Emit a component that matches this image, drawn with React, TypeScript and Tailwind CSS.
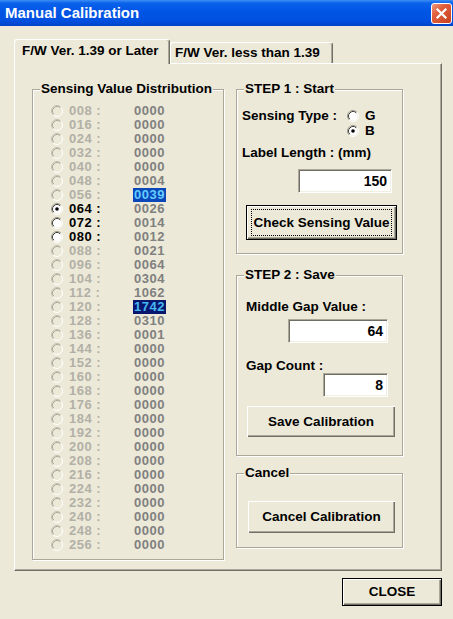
import type { ReactNode } from 'react';

const VALUES = [
  '0000', '0000', '0000', '0000', '0000', '0004', '0039', '0026',
  '0014', '0012', '0021', '0064', '0304', '1062', '1742', '0310',
  '0001', '0000', '0000', '0000', '0000', '0000', '0000', '0000',
  '0000', '0000', '0000', '0000', '0000', '0000', '0000', '0000',
];

const ROWS = VALUES.map((value, i) => {
  const n = (i + 1) * 8;
  return {
    label: String(n).padStart(3, '0'),
    value,
    active: n >= 64 && n <= 80,
    checked: n === 64,
    mark: n === 56 ? 'light' : n === 120 ? 'dark' : '',
  };
});

function Radio({ checked = false, disabled = false }: { checked?: boolean; disabled?: boolean }) {
  return (
    <svg width="12" height="12" viewBox="0 0 12 12" className="shrink-0">
      <circle cx="6" cy="6" r="4.5" fill={disabled ? '#ece9d8' : '#ffffff'} />
      <path d="M2.11 9.89A5.5 5.5 0 0 1 9.89 2.11" fill="none" stroke={disabled ? '#c4c1b3' : '#9d9a8c'} />
      <path d="M9.89 2.11A5.5 5.5 0 0 1 2.11 9.89" fill="none" stroke="#ffffff" />
      <path d="M2.82 9.18A4.5 4.5 0 0 1 9.18 2.82" fill="none" stroke={disabled ? '#aca899' : '#404040'} />
      {checked && <circle cx="6" cy="6" r="1.8" fill="#000000" />}
    </svg>
  );
}

function Group({ title, className, children }: { title: string; className: string; children: ReactNode }) {
  return (
    <div className={`relative border border-[#aca899] shadow-[1px_1px_0_#ffffff,inset_1px_1px_0_#ffffff] ${className}`}>
      <span className="absolute -top-[9px] left-[7px] bg-[#ece9d8] px-px text-[13.5px] leading-[16px] whitespace-nowrap">
        {title}
      </span>
      {children}
    </div>
  );
}

function Edit({ value, className }: { value: string; className: string }) {
  return (
    <div
      className={`h-[24px] bg-white border border-t-[#aca899] border-l-[#aca899] border-r-white border-b-white shadow-[inset_1px_1px_0_#716f64,inset_-1px_-1px_0_#f1efe2] flex items-center justify-end pr-[4px] text-[14px] ${className}`}
    >
      {value}
    </div>
  );
}

function Btn({
  children,
  def = false,
  focus = false,
  className,
}: {
  children: ReactNode;
  def?: boolean;
  focus?: boolean;
  className: string;
}) {
  return (
    <button
      type="button"
      className={`flex bg-[#ece9d8] font-bold text-[13.5px] leading-none text-black shadow-[inset_1px_1px_0_#ffffff,inset_-1px_-1px_0_#716f64,inset_-2px_-2px_0_#aca899] ${
        def ? 'border border-black' : ''
      } ${className}`}
    >
      <span
        className={`flex-1 flex items-center justify-center ${
          focus ? 'mx-[4px] my-[3px] border border-dotted border-black' : ''
        }`}
      >
        {children}
      </span>
    </button>
  );
}

function TitleBar() {
  return (
    <div className="h-[26px] flex items-center justify-between pl-[5px] pr-[1px] bg-[linear-gradient(180deg,#3d8ff5_0%,#0a62ea_12%,#0055e5_45%,#0050e0_80%,#0043c9_100%)]">
      <span className="text-white text-[15px] leading-none pb-[1px]">Manual Calibration</span>
      <div className="w-[21px] h-[21px] rounded-[3px] border border-white bg-[linear-gradient(135deg,#f09a80_0%,#e0603e_35%,#c8401f_100%)] flex items-center justify-center">
        <svg width="13" height="13" viewBox="0 0 13 13">
          <path d="M2.5 2.5L10.5 10.5M10.5 2.5L2.5 10.5" stroke="#ffffff" strokeWidth="2.2" strokeLinecap="square" />
        </svg>
      </div>
    </div>
  );
}

export default function App() {
  return (
    <div className="w-[453px] h-[619px] bg-[#ece9d8] font-['Liberation_Sans',Arial,sans-serif] font-bold text-black overflow-hidden select-none">
      <TitleBar />

      <div className="pl-[14px] pt-[13px]">
        {/* Tabs */}
        <div className="flex items-end h-[24px] text-[13.5px]">
          <div className="relative z-10 -mb-px h-[25px] w-[156px] bg-[#ece9d8] border-t border-l border-r border-t-white border-l-white border-r-[#716f64] rounded-t-[3px] shadow-[inset_-1px_0_0_#aca899] flex items-center pl-[7px] pb-[2px] whitespace-nowrap">
            F/W Ver. 1.39 or Later
          </div>
          <div className="h-[21px] w-[163px] border-t border-l border-r border-t-white border-l-white border-r-[#716f64] rounded-t-[3px] shadow-[inset_-1px_0_0_#aca899] flex items-center pl-[4px] whitespace-nowrap">
            F/W Ver. less than 1.39
          </div>
        </div>

        {/* Panel */}
        <div className="w-[428px] h-[508px] border border-t-white border-l-white border-r-[#716f64] border-b-[#716f64] shadow-[inset_-1px_-1px_0_#aca899] flex gap-[12px] pl-[17px] pt-[25px]">
          <Group title="Sensing Value Distribution" className="w-[192px] h-[471px]">
            <div className="flex flex-col pt-[14px] pl-[18px]">
              {ROWS.map((row) => (
                <div key={row.label} className="h-[14px] flex items-center text-[13px] leading-[14px] tracking-[0.5px]">
                  <Radio checked={row.checked} disabled={!row.active} />
                  <span className={`ml-[6px] w-[65px] ${row.active ? 'text-black' : 'text-[#b2b0a6]'}`}>
                    {row.label} :
                  </span>
                  <span
                    className={`-ml-px px-px ${
                      row.mark === 'light'
                        ? 'bg-[#0b47b8] text-[#62cdff]'
                        : row.mark === 'dark'
                          ? 'bg-[#08166e] text-[#46b8f2]'
                          : 'text-[#808080]'
                    }`}
                  >
                    {row.value}
                  </span>
                </div>
              ))}
            </div>
          </Group>

          <div className="w-[167px] flex flex-col text-[13.5px]">
            <Group title="STEP 1 : Start" className="h-[165px]">
              <div className="flex flex-col pt-[18px] pl-[5px]">
                <div className="flex">
                  <span className="w-[105px] leading-[15px]">Sensing Type :</span>
                  <div className="flex flex-col">
                    <div className="h-[15px] flex items-center gap-[6px]">
                      <Radio />
                      <span className="leading-none">G</span>
                    </div>
                    <div className="h-[15px] flex items-center gap-[6px]">
                      <Radio checked />
                      <span className="leading-none">B</span>
                    </div>
                  </div>
                </div>
                <span className="mt-[7px] leading-[16px]">Label Length : (mm)</span>
                <Edit value="150" className="mt-[8px] ml-[56px] w-[94px]" />
                <Btn def focus className="mt-[12px] ml-[4px] w-[151px] h-[35px]">
                  Check Sensing Value
                </Btn>
              </div>
            </Group>

            <Group title="STEP 2 : Save" className="mt-[21px] h-[181px]">
              <div className="flex flex-col pt-[24px] pl-[9px]">
                <span className="leading-[14px]">Middle Gap Value :</span>
                <Edit value="64" className="mt-[5px] ml-[42px] w-[100px]" />
                <span className="mt-[16px] leading-[14px]">Gap Count :</span>
                <Edit value="8" className="mt-0 ml-[77px] w-[65px]" />
                <Btn className="mt-[9px] ml-px w-[148px] h-[31px]">Save Calibration</Btn>
              </div>
            </Group>

            <Group title="Cancel" className="mt-[17px] h-[75px]">
              <div className="flex flex-col pt-[27px] pl-[11px]">
                <Btn className="w-[147px] h-[32px]">Cancel Calibration</Btn>
              </div>
            </Group>
          </div>
        </div>

        <div className="w-[428px] flex justify-end mt-[7px]">
          <Btn def className="w-[100px] h-[28px]">
            CLOSE
          </Btn>
        </div>
      </div>
    </div>
  );
}
